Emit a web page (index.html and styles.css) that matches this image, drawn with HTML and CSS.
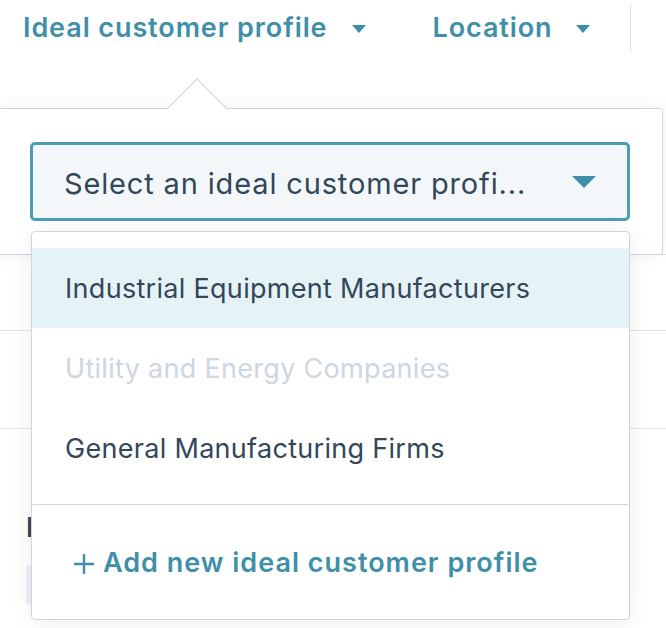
FILE: index.html
```html
<!DOCTYPE html>
<html lang="en">
<head>
  <meta charset="UTF-8" />
  <meta name="viewport" content="width=device-width, initial-scale=1.0"/>
  <title>Prospects</title>
  <link rel="stylesheet" href="styles.css">
</head>
<body>

<header class="topbar">
  <button class="filter filter-icp" type="button">Ideal customer profile <span class="caret"></span></button>
  <button class="filter filter-location" type="button">Location <span class="caret"></span></button>
  <span class="divider"></span>
</header>

<main class="table">
  <div class="row row-first"></div>
  <div class="row row-second"></div>
  <div class="row row-third"></div>
  <section class="field">
    <h3>Industry</h3>
    <div class="field-input"></div>
  </section>
</main>

<!-- ICP filter popover -->
<div class="popover">
  <span class="popover-arrow"></span>
  <div class="select">
    <span class="select-value">Select an ideal customer profi...</span>
    <span class="select-caret"></span>
  </div>
</div>

<div class="menu">
  <ul class="menu-list">
    <li class="menu-item is-hover">Industrial Equipment Manufacturers</li>
    <li class="menu-item is-disabled">Utility and Energy Companies</li>
    <li class="menu-item">General Manufacturing Firms</li>
  </ul>
  <div class="menu-footer">
    <button class="add-link" type="button">
      <svg class="plus" width="22" height="22" viewBox="0 0 22 22">
        <path d="M11 1v20M1 11h20" stroke="currentColor" stroke-width="2.4" fill="none"/>
      </svg>
      Add new ideal customer profile
    </button>
  </div>
</div>

</body>
</html>
```

FILE: styles.css
```css
:root {
  --teal: #3f8fa8;
  --teal-border: #4a9eb4;
  --text-dark: #33475b;
  --text-disabled: #cdd6e1;
  --border: #cbd6e2;
  --row-line: #dfe3eb;
  --hover-bg: #e6f3f6;
  --input-bg: #f3f7fa;
}

* {
  box-sizing: border-box;
}

body {
  margin: 0;
  width: 666px;
  height: 628px;
  overflow: hidden;
  position: relative;
  background: white;
  font-family: Inter, Lato, sans-serif;
  color: var(--text-dark);
}

button {
  font-family: inherit;
  background: none;
  border: none;
  padding: 0;
  cursor: pointer;
}

/* top filter bar */
.topbar {
  height: 56px;
  display: flex;
  align-items: center;
}

.filter {
  display: flex;
  align-items: center;
  font-size: 27px;
  font-weight: 600;
  letter-spacing: 0.9px;
  color: var(--teal);
  line-height: 34px;
}

.filter-icp {
  margin-left: 23px;
}

.filter-location {
  margin-left: 67px;
}

.caret {
  width: 0;
  height: 0;
  margin-left: 24px;
  margin-top: 2px;
  border-left: 7px solid transparent;
  border-right: 7px solid transparent;
  border-top: 8px solid var(--teal);
}

.divider {
  width: 1px;
  height: 48px;
  margin-left: 40px;
  background: var(--row-line);
}

/* page rows underneath */
.row {
  border-bottom: 1px solid var(--row-line);
}

.row-first {
  height: 199px;
}

.row-second {
  height: 76px;
}

.row-third {
  height: 98px;
}

.field {
  padding: 82px 0 0 26px;
}

.field h3 {
  margin: 0;
  font-size: 27px;
  line-height: 34px;
  font-weight: 600;
  color: var(--text-dark);
}

.field-input {
  width: 300px;
  height: 40px;
  margin-top: 20px;
  border-radius: 4px;
  background: #eaf0f6;
}

/* popover */
.popover {
  position: absolute;
  top: 108px;
  left: -10px;
  padding: 33px 32px 33px 39px;
  background: white;
  border: 1px solid var(--border);
  border-radius: 4px;
  box-shadow: 0 0 18px rgba(0, 0, 0, 0.06);
}

.popover-arrow {
  position: absolute;
  top: -22px;
  left: 185px;
  width: 42px;
  height: 42px;
  background: white;
  border-top: 1px solid var(--border);
  border-left: 1px solid var(--border);
  transform: rotate(45deg);
}

.select {
  position: relative;
  width: 600px;
  height: 79px;
  display: flex;
  align-items: center;
  justify-content: space-between;
  padding: 0 31px;
  background: var(--input-bg);
  border: 3px solid var(--teal-border);
  border-radius: 5px;
}

.select-value {
  margin-top: 3px;
  font-size: 29px;
  letter-spacing: 0.85px;
  color: var(--text-dark);
}

.select-caret {
  width: 0;
  height: 0;
  border-left: 12px solid transparent;
  border-right: 12px solid transparent;
  border-top: 12px solid var(--teal);
}

/* dropdown menu */
.menu {
  position: absolute;
  top: 231px;
  left: 31px;
  width: 599px;
  height: 389px;
  background: white;
  border: 1px solid var(--border);
  border-radius: 4px;
  box-shadow: 0 2px 22px rgba(0, 0, 0, 0.07);
  padding-top: 16px;
}

.menu-list {
  list-style: none;
  margin: 0;
  padding: 0;
}

.menu-item {
  height: 80px;
  display: flex;
  align-items: center;
  padding-left: 33px;
  font-size: 27px;
  letter-spacing: 0.3px;
  color: var(--text-dark);
}

.menu-item.is-hover {
  background: var(--hover-bg);
}

.menu-item.is-disabled {
  color: var(--text-disabled);
}

.menu-footer {
  margin: 16px -1px 0;
  height: 114px;
  display: flex;
  align-items: center;
  padding-left: 42px;
  padding-top: 2px;
  border-top: 1px solid var(--border);
  border-radius: 4px 4px 0 0;
}

.add-link {
  display: flex;
  align-items: center;
  gap: 8px;
  font-size: 27px;
  font-weight: 600;
  letter-spacing: 1px;
  color: var(--teal);
}

.plus {
  margin-top: 2px;
}
```
